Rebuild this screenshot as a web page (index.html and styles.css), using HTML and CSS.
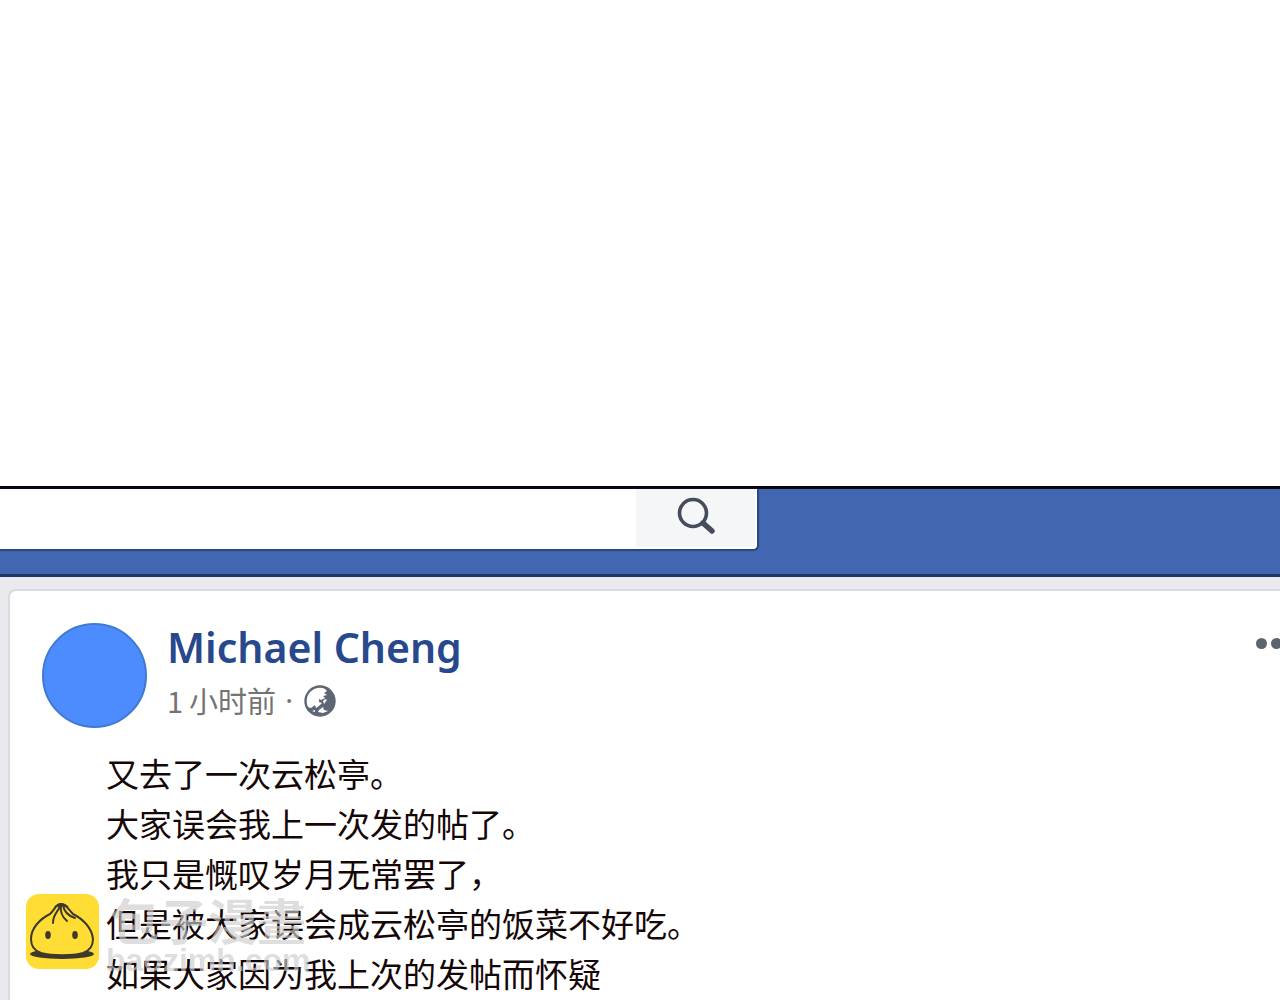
FILE: index.html
```html
<!DOCTYPE html>
<html lang="zh-CN">
  <head>
    <meta charset="utf-8">
    <title>Michael Cheng</title>

    <link rel="stylesheet" href="styles.css">
  </head>
  <body>
    <header class="topbar">
      <form class="search">
        <input type="text" class="search-input" name="q" aria-label="搜索">
        <button type="submit" class="search-button" aria-label="搜索">
          <svg width="40" height="40" viewBox="0 0 40 40">
            <circle cx="17" cy="16" r="13.5" fill="none" stroke="#454c5b" stroke-width="3.6" />
            <path d="M27 26 L36 34" stroke="#454c5b" stroke-width="5.500" stroke-linecap="round" />
          </svg>
        </button>
      </form>
    </header>

    <main class="feed">
      <article class="post">
        <div class="post-header">
          <div class="avatar"></div>
          <div class="post-info">
            <h1><a href="#" class="author">Michael Cheng</a></h1>
            <p class="meta">
              <span>1</span><span>小时前</span>
              <span class="dot">·</span>
              <svg class="globe" width="34" height="34" viewBox="0 0 34 34">
                <circle cx="18" cy="18" r="14.5" fill="#fff" stroke="#5f6673" stroke-width="2.400" />
                <path d="M22 5 L25 8 L22 10 L25 12 L21 13 L23 15 L19 17 L17 16 L17 19 L20 20 L17 23 L14 25 L13 22 L9 25 L5 24 Q9 32 18 32 Q27 32 31 25 Q34 17 30 10 Q27 5 22 5 Z" fill="#5f6673" />
                <path d="M21 18 l2 -2 2 1 -3 4z M17 27 l4 -3 1 3 4 1 -5 2 -5 -1z M10 28 l3 -1 0 2z" fill="#fff" />
              </svg>
            </p>
          </div>
          <button type="button" class="more" aria-label="更多">
            <span></span><span></span><span></span>
          </button>
        </div>

        <p class="post-text">
          又去了一次云松亭。<br>
          大家误会我上一次发的帖了。<br>
          我只是慨叹岁月无常罢了，<br>
          但是被大家误会成云松亭的饭菜不好吃。<br>
          如果大家因为我上次的发帖而怀疑
        </p>
      </article>
    </main>

    <div class="watermark">
      <svg width="74" height="76" viewBox="0 0 74 76">
        <rect width="73" height="75" rx="13" fill="#ffdd35" />
        <ellipse cx="36" cy="60" rx="32" ry="5" fill="#3d3a2c" />
        <path d="M35 10 C30 10 29 15 24 20 C14 25 5 34 5 45 C5 53 9 57 15 59 C26 62 47 62 57 59 C63 57 67 53 67 45 C66 34 57 25 47 20 C42 15 40 10 35 10 Z" fill="#ffdd35" stroke="#3d3a2c" stroke-width="2" />
        <path d="M28 13 Q35 5 43 13 Q36 12 28 13 Z" fill="#3d3a2c" />
        <path d="M34 11 C33 18 27 19 27 29 M35 11 C34 18 36 23 41 27 M37 11 C38 18 43 22 49 24" fill="none" stroke="#3d3a2c" stroke-width="2" stroke-linecap="round" />
        <ellipse cx="22" cy="41" rx="2.800" ry="4" fill="#3d3a2c" />
        <ellipse cx="49" cy="41" rx="2.800" ry="4" fill="#3d3a2c" />
      </svg>
      <div class="watermark-text">
        <span class="watermark-name">包子漫畫</span>
        <span class="watermark-site">baozimh.com</span>
      </div>
    </div>
  </body>
</html>
```

FILE: styles.css
```css
* {
  box-sizing: border-box;
}

body,
h1,
p {
  margin: 0;
}

body {
  display: flex;
  flex-direction: column;
  min-height: 100vh;
  padding-top: 486px;
  overflow: hidden;
  background: #fff;
  font-family: "Noto Sans", "Noto Sans CJK SC", sans-serif;
}

/* Top bar */
.topbar {
  padding-bottom: 24px;
  border-top: 3px solid #05070c;
  border-bottom: 3px solid #1c3768;
  background: #4267b0;
}

.search {
  display: flex;
  width: 60%;
  max-width: 757px;
  height: 60px;
  margin-bottom: 1px;
  border-right: 2px solid #fff;
  border-bottom: 2px solid #fff;
  border-radius: 0 0 4px 0;
  background: #fff;
  box-shadow: 1px 1px 1px 1px #294780;
}

.search-input {
  flex: 1;
  min-width: 0;
  padding: 0 16px;
  border: 0;
  background: #fff;
  font-size: 28px;
}

.search-button {
  width: 119px;
  padding: 0;
  border: 0;
  background: #f5f6f8;
}

/* Post */
.feed {
  flex: 1;
  display: flex;
  padding: 12px 0 0 8px;
  background: #e9e9ee;
}

.post {
  flex: 1;
  padding: 32px 0 0 32px;
  border-top: 2px solid #dad9e4;
  border-left: 2px solid #dad9e4;
  border-radius: 8px 0 0 0;
  background: #fff;
}

.post-header {
  display: flex;
}

.avatar {
  width: 105px;
  height: 105px;
  border: 2px solid #4078d2;
  border-radius: 50%;
  background: #4d8cff;
}

.post-info {
  flex: 1;
  padding-left: 20px;
}

h1 {
  font-size: 41px;
  font-weight: 600;
  line-height: 48px;
}

.author {
  color: #27488c;
  text-decoration: none;
}

.meta {
  display: flex;
  align-items: center;
  gap: 6px;
  margin-top: 12px;
  color: #737373;
  font-family: "Noto Sans CJK SC", sans-serif;
  font-size: 29px;
  line-height: 34px;
}

.dot {
  padding: 0 3px;
  font-family: "Noto Sans", sans-serif;
}

.more {
  display: flex;
  gap: 4px;
  align-self: flex-start;
  margin: 15px -17px 0 0;
  padding: 0;
  border: 0;
  background: none;
}

.more span {
  width: 11px;
  height: 11px;
  border-radius: 50%;
  background: #5c656f;
}

.post-text {
  padding: 20px 0 0 64px;
  color: #150707;
  font-family: "Noto Sans CJK SC", sans-serif;
  font-size: 33px;
  font-weight: 400;
  line-height: 50px;
}

/* Site mark over the lower left corner */
.watermark {
  position: fixed;
  left: 26px;
  bottom: 24px;
  display: flex;
  gap: 6px;
  color: rgba(205, 205, 205, 0.65);
  font-weight: 700;
  pointer-events: none;
}

.watermark-text {
  display: flex;
  flex-direction: column;
}

.watermark-name {
  padding-left: 4px;
  font-family: "Noto Sans CJK TC", sans-serif;
  font-size: 49px;
  line-height: 50px;
}

.watermark-site {
  font-family: "Liberation Sans", sans-serif;
  font-size: 32px;
  line-height: 32px;
}
```
